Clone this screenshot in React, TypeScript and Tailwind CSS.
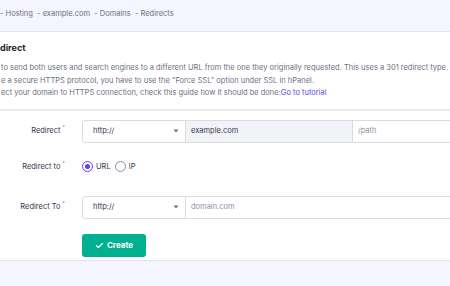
import React from 'react';

const Req = () => <span className="ml-[2px] -mt-[6px] text-[5px] text-[#fc5185]">*</span>;

const Chevron = () => (
  <svg width="6" height="4" viewBox="0 0 6 4" className="absolute right-[6px] top-1/2 -translate-y-1/2">
    <path d="M0.5 0.5 L3 3.5 L5.5 0.5 Z" fill="#6d7081" />
  </svg>
);

const Label = ({ children }: { children: React.ReactNode }) => (
  <div className="w-[66px] flex justify-end items-center pr-[1px] text-[7.5px] text-[#36344d]">
    <span>{children}</span>
    <Req />
  </div>
);

const Select = () => (
  <div className="relative w-[104px] h-full flex items-center pl-[10px] bg-white border border-[#dadce0] rounded-l-[3px] text-[7.5px] text-[#36344d]">
    http://
    <Chevron />
  </div>
);

export default function App() {
  return (
    <div className="w-[450px] h-[286px] overflow-hidden bg-[#f4f5ff] font-['Inter',sans-serif]">
      <div className="h-[32px] flex items-center border-b border-[#e4e4ee] text-[7.5px] text-[#6d7081] pb-[3px]">
        <span>- Hosting&nbsp;&nbsp;- example.com&nbsp;&nbsp;- Domains&nbsp;&nbsp;- Redirects</span>
      </div>
      <div className="bg-white pt-[10px] pb-[9px] border-b-2 border-[#e9e9ef]">
        <h2 className="h-[12px] leading-[12px] text-[9px] font-bold text-[#1d1e20]">direct</h2>
        <div className="mt-[8px] pl-[1px] text-[7.5px] leading-[12.5px] text-[#6d7081] whitespace-nowrap">
          <p>to send both users and search engines to a different URL from the one they originally requested. This uses a 301 redirect type.</p>
          <p>e a secure HTTPS protocol, you have to use the "Force SSL" option under SSL in hPanel.</p>
          <p>
            ect your domain to HTTPS connection, check this guide how it should be done:
            <span className="text-[#673de6]">Go to tutorial</span>
          </p>
        </div>
      </div>
      <div className="bg-white pt-[9px] pb-[3px] border-b border-[#e4e4ee]">
        <div className="flex h-[23px] gap-[16px]">
          <Label>Redirect</Label>
          <div className="flex flex-1 h-full">
            <Select />
            <div className="w-[166px] h-full flex items-center pl-[5px] bg-[#f2f3f6] border-y border-[#dadce0] text-[7.5px] text-[#36344d]">
              example.com
            </div>
            <div className="flex-1 h-full flex items-center pl-[5px] bg-white border border-[#dadce0] border-r-0 text-[7.5px] text-[#8c8fa3]">
              /path
            </div>
          </div>
        </div>
        <div className="flex h-[12px] mt-[18px] gap-[16px]">
          <Label>Redirect to</Label>
          <div className="flex items-center text-[7.5px] text-[#36344d]">
            <span className="w-[11px] h-[11px] rounded-full border border-[#673de6] flex items-center justify-center">
              <span className="w-[5px] h-[5px] rounded-full bg-[#673de6]" />
            </span>
            <span className="ml-[3px]">URL</span>
            <span className="ml-[4px] w-[11px] h-[11px] rounded-full border border-[#8c8fa3]" />
            <span className="ml-[3px]">IP</span>
          </div>
        </div>
        <div className="flex h-[23px] mt-[23px] gap-[16px]">
          <Label>Redirect To</Label>
          <div className="flex flex-1 h-full">
            <Select />
            <div className="flex-1 h-full flex items-center pl-[5px] bg-white border border-l-0 border-r-0 border-[#dadce0] text-[7.5px] text-[#8c8fa3]">
              domain.com
            </div>
          </div>
        </div>
        <div className="flex mt-[15px] pl-[82px]">
          <button className="w-[64px] h-[23px] flex items-center justify-center gap-[3px] rounded-[3px] bg-[#00b090] text-white text-[8px] font-bold">
            <svg width="9" height="9" viewBox="0 0 24 24" fill="none" stroke="white" strokeWidth="3.5" strokeLinecap="round" strokeLinejoin="round">
              <path d="M4 12.5l5 5L20 6.5" />
            </svg>
            Create
          </button>
        </div>
      </div>
    </div>
  );
}
